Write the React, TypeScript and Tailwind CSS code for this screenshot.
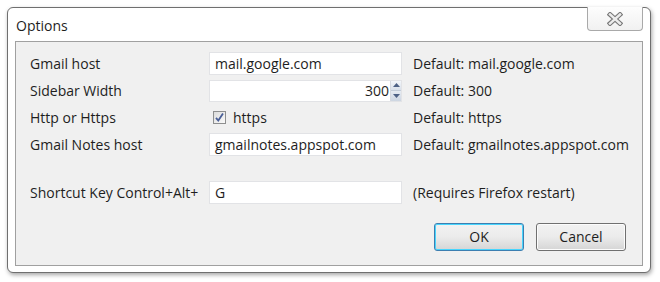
import React from "react";

const font = { fontFamily: '"Open Sans", "Noto Sans", sans-serif' };

function CloseX() {
  return (
    <svg width="16" height="14" viewBox="0 0 16 14">
      <g strokeLinecap="square">
        <path d="M3 2.5 L13 11.5 M13 2.5 L3 11.5" stroke="#777777" strokeWidth="4.6" fill="none" />
        <path d="M3 2.5 L13 11.5 M13 2.5 L3 11.5" stroke="#ececec" strokeWidth="2.4" fill="none" />
      </g>
    </svg>
  );
}

function TextBox({ value }: { value: string }) {
  return (
    <div className="h-[23px] w-[193px] border border-[#e2e3e6] bg-white flex items-center pl-[5px] text-[14px] text-[#1e1e1e] leading-none">
      {value}
    </div>
  );
}

function Spinner() {
  return (
    <div className="h-[22px] w-[193px] border border-[#e2e3e6] bg-white flex items-center">
      <div className="flex-1 text-right pr-[1px] text-[14px] text-[#1e1e1e] leading-none">300</div>
      <div className="w-[11px] h-[20px] flex flex-col border-l border-[#d5d9e0]">
        <div className="flex-1 bg-gradient-to-b from-[#f3f6fa] to-[#d8e0ea] border-b border-[#c3ccd8] flex items-center justify-center">
          <svg width="7" height="4" viewBox="0 0 7 4">
            <path d="M0 4 L3.5 0 L7 4 Z" fill="#4d6185" />
          </svg>
        </div>
        <div className="flex-1 bg-gradient-to-b from-[#e6ebf2] to-[#cdd6e2] flex items-center justify-center">
          <svg width="7" height="4" viewBox="0 0 7 4">
            <path d="M0 0 L3.5 4 L7 0 Z" fill="#4d6185" />
          </svg>
        </div>
      </div>
    </div>
  );
}

function Check() {
  return (
    <div className="flex items-center">
      <div className="ml-[4px] w-[13px] h-[13px] border border-[#8e8f8f] bg-gradient-to-br from-[#dcdcdc] to-[#fafafa] flex items-center justify-center">
        <svg width="11" height="11" viewBox="0 0 11 11">
          <path d="M2 5.8 L4.3 8.5 L9 1.5" fill="none" stroke="#4a5f97" strokeWidth="1.8" />
        </svg>
      </div>
      <span className="ml-[7px] text-[14px] text-[#1e1e1e] leading-none">https</span>
    </div>
  );
}

function Row({ label, control, note }: { label: string; control: React.ReactNode; note: string }) {
  return (
    <div className="h-[27px] grid grid-cols-[179px_193px_1fr] gap-x-0 items-center text-[14px] text-[#1e1e1e]">
      <div className="leading-none whitespace-nowrap">{label}</div>
      <div>{control}</div>
      <div className="pl-[11px] leading-none whitespace-nowrap">{note}</div>
    </div>
  );
}

function Btn({ children, def }: { children: React.ReactNode; def?: boolean }) {
  return (
    <div
      className={
        "w-[90px] h-[28px] rounded-[3px] border flex items-center justify-center text-[14px] text-[#1e1e1e] leading-none " +
        (def
          ? "border-[#3c7fb1] shadow-[inset_0_0_0_1px_#48d5fd] bg-gradient-to-b from-[#f2f2f2] via-[#ebebeb] to-[#d5d5d5]"
          : "border-[#707070] shadow-[inset_0_0_0_1px_#fcfcfc] bg-gradient-to-b from-[#f2f2f2] via-[#ebebeb] to-[#d5d5d5]")
      }
    >
      {children}
    </div>
  );
}

export default function App() {
  return (
    <div className="w-[660px] h-[282px] bg-white pt-[7px] pl-[7px]" style={font}>
      <div className="w-[644px] h-[266px] border border-[#6f6f6f] rounded-[6px] bg-white shadow-[1px_2px_4px_rgba(0,0,0,0.35)] flex flex-col px-[7px] pb-[6px]">
        <div className="h-[33px] flex items-start justify-between">
          <div className="pl-[1px] pt-[8px] text-[14px] text-[#1e1e1e] leading-[20px]">Options</div>
          <div className="-mt-[1px] w-[56px] h-[24px] border border-t-0 border-[#a9a9a9] rounded-b-[4px] bg-gradient-to-b from-[#fdfdfd] to-[#f1f1f1] flex items-center justify-center">
            <CloseX />
          </div>
        </div>
        <div className="h-[225px] border border-[#a0a0a0] bg-[#f0f0f0] pl-[14px] pr-[16px] pt-[8px] flex flex-col">
          <Row label="Gmail host" control={<TextBox value="mail.google.com" />} note="Default: mail.google.com" />
          <Row label="Sidebar Width" control={<Spinner />} note="Default: 300" />
          <Row label="Http or Https" control={<Check />} note="Default: https" />
          <Row label="Gmail Notes host" control={<TextBox value="gmailnotes.appspot.com" />} note="Default: gmailnotes.appspot.com" />
          <div className="h-[21px]" />
          <Row label="Shortcut Key Control+Alt+" control={<TextBox value="G" />} note="(Requires Firefox restart)" />
          <div className="mt-[17px] flex justify-end gap-[12px]">
            <Btn def>OK</Btn>
            <Btn>Cancel</Btn>
          </div>
        </div>
      </div>
    </div>
  );
}
